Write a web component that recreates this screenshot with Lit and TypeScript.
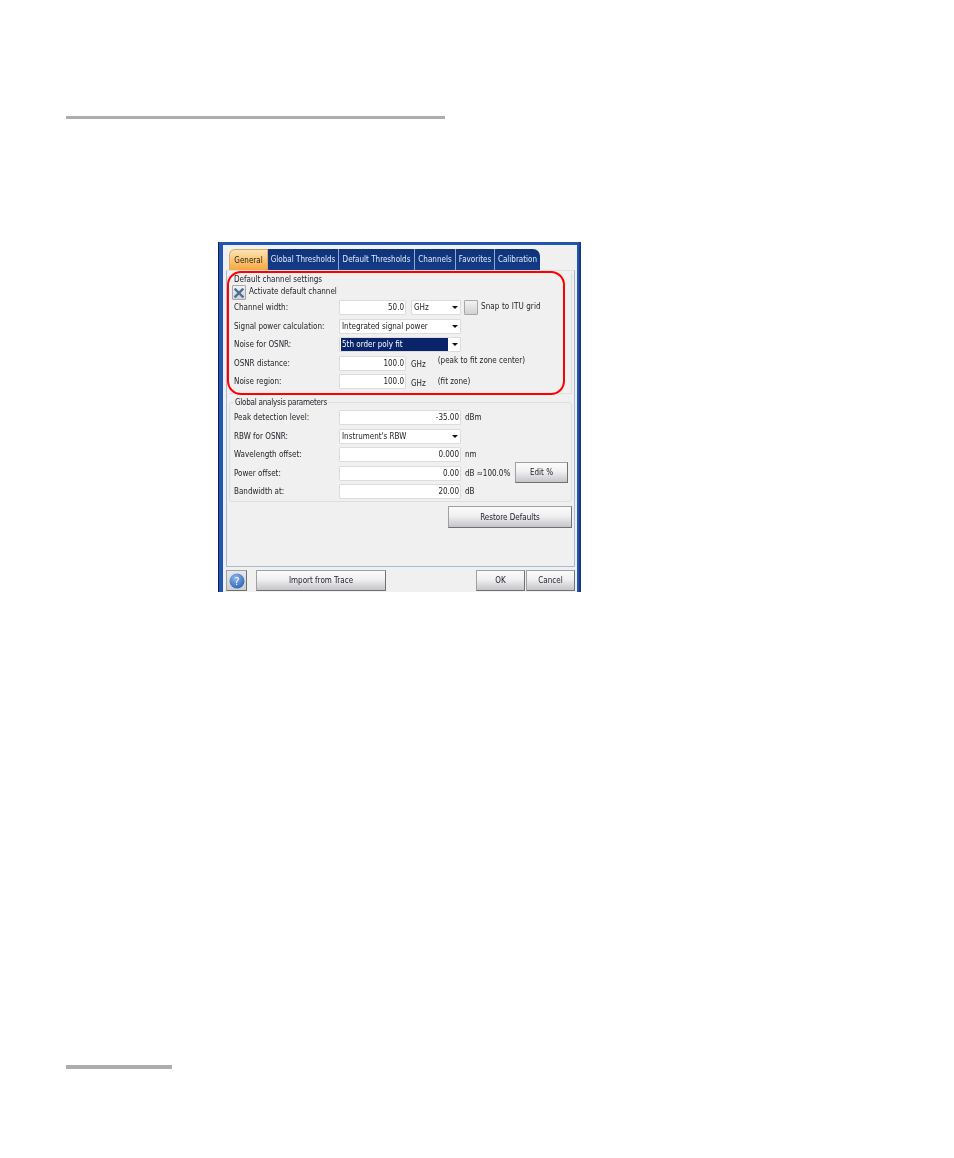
import { LitElement, html, css } from "lit";
import { customElement } from "lit/decorators.js";

const tabs = ["General", "Global Thresholds", "Default Thresholds", "Channels", "Favorites", "Calibration"];

@customElement("app-root")
export class AppRoot extends LitElement {
  static styles = css`
    :host { display: block; height: 1158px; background: #fff; font-family: "DejaVu Sans Condensed", "DejaVu Sans", sans-serif; font-stretch: condensed; }
    .page { padding: 116px 0 0 66px; }
    .rule { background: #adadad; }
    .rule.top { width: 379px; height: 3px; }
    .rule.bottom { width: 106px; height: 4px; margin-top: 473px; }
    .window {
      position: relative; box-sizing: border-box; width: 363px; height: 350px;
      margin: 123px 0 0 152px; padding: 3px 4px 0 5px;
      background: #2055b0; box-shadow: inset 1px 0 #10234f, inset -2px 0 #1a3a80;
      font-size: 8px; color: #22222a; filter: blur(0.25px);
    }
    .inner { height: 347px; background: #f0f0f0; padding: 4px 0 0 3px; box-sizing: border-box; width: 354px; }
    .tabs { display: flex; height: 21px; margin-left: 3px; white-space: nowrap; }
    .tab {
      display: flex; align-items: center; justify-content: center; box-sizing: border-box;
      background: linear-gradient(#0f3378, #133c88); color: #e6ecf8; border-right: 1px solid #8ea6d0;
    }
    .tab:nth-child(1) { width: 39px; background: linear-gradient(#fde3b4, #f7a83e); color: #2a2210; border-radius: 6px 0 0 0; border: 1px solid #d9a866; border-bottom: none; }
    .tab:nth-child(2) { width: 71px; }
    .tab:nth-child(3) { width: 76px; }
    .tab:nth-child(4) { width: 41px; }
    .tab:nth-child(5) { width: 39px; }
    .tab:nth-child(6) { width: 45px; border-right: none; border-radius: 0 7px 0 0; }
    .panel {
      box-sizing: border-box; width: 349px; height: 297px; padding: 2px 2px 0 2px;
      border: 1px solid #a9b8d0; border-top: 1px solid #e0e0e0;
    }
    .group { box-sizing: border-box; width: 343px; padding-left: 4px; border-right: 1px solid #dedede; }
    .group.one { height: 121px; padding-top: 1px; border-bottom: 1px solid #e2e2e2; }
    .group.two { height: 100px; margin-top: 8px; border: 1px solid #dedede; border-radius: 3px; }
    .legend { height: 11px; line-height: 11px; padding-left: 1px; }
    .group.two .legend { height: 8px; line-height: 8px; margin-top: -4px; background: #f0f0f0; display: table; padding: 0 1px; margin-bottom: 3px; letter-spacing: -0.25px; }
    .check-row { display: flex; align-items: center; gap: 3px; height: 15px; margin-left: -1px; }
    .check-row span { margin-top: -3px; }
    .cb {
      box-sizing: border-box; width: 14px; height: 15px; border: 1px solid #a8a8a8; border-radius: 1px;
      background: linear-gradient(#f2f2f2, #d2d2d2); display: flex; align-items: center; justify-content: center; flex: none;
    }
    .rows { display: grid; row-gap: 3.5px; }
    .row { display: flex; align-items: center; height: 15px; white-space: nowrap; }
    .label { width: 106px; flex: none; padding-left: 1px; box-sizing: border-box; }
    .group.two .label { width: 105px; padding-left: 0; }
    .field {
      box-sizing: border-box; height: 15px; line-height: 13px; background: #fff; border: 1px solid #dcdcdc; border-radius: 1px;
      padding: 0 1px 0 2px; flex: none; white-space: nowrap; position: relative; color: #1c1c1c;
    }
    .num { width: 67px; text-align: right; }
    .num.wide { width: 122px; }
    .sel { width: 122px; }
    .sel.small { width: 50px; margin-left: 5px; }
    .sel::after {
      content: ""; position: absolute; right: 2px; top: 5px;
      border: 3px solid transparent; border-top: 3px solid #111; border-bottom: none;
    }
    .hl { display: block; background: #0a246a; color: #fff; width: 106px; margin-left: -1px; padding-left: 1px; height: 13px; }
    .unit { margin-left: 4px; }
    .unit.wide { width: 46px; flex: none; }
    .low { margin-left: 5px; padding-top: 3px; }
    .note { margin-left: 12px; }
    .note.a { margin-top: -5px; }
    .snap { margin-left: 3px; margin-top: -1px; }
    .snap-text { margin-left: 3px; margin-top: -3px; letter-spacing: 0.1px; }
    .btn {
      box-sizing: border-box; display: flex; align-items: center; justify-content: center; flex: none;
      background: linear-gradient(#fbfbfb 0%, #f0f0f2 45%, #c4c4ca 100%);
      border: 1px solid #a0a0a0; border-right-color: #707070; border-bottom-color: #707070; color: #1d1d28;
    }
    .edit { width: 53px; height: 21px; margin-left: 4px; margin-top: -2px; }
    .restore-row { display: flex; justify-content: flex-end; width: 343px; margin-top: 4px; }
    .restore { width: 124px; height: 22px; }
    .footer { display: flex; margin-top: 3px; height: 21px; width: 349px; }
    .help { width: 21px; height: 21px; padding: 0; background: linear-gradient(#e8e8e8, #cfcfcf); }
    .import { width: 130px; margin-left: 9px; }
    .ok { width: 49px; margin-left: 90px; }
    .cancel { width: 49px; margin-left: 1px; }
    .ring {
      position: absolute; left: 9px; top: 29px; width: 338px; height: 124px; box-sizing: border-box;
      border: 2px solid #f00; border-radius: 14px; pointer-events: none;
    }
    .help text { font-family: "DejaVu Sans", sans-serif; font-size: 11px; fill: #fff; }
  `;

  render() {
    return html`
      <div class="page">
        <div class="rule top"></div>
        <div class="window">
          <div class="inner">
            <div class="tabs">${tabs.map((t) => html`<div class="tab">${t}</div>`)}</div>
            <div class="panel">
              <div class="group one">
                <div class="legend">Default channel settings</div>
                <div class="check-row">
                  <div class="cb">
                    <svg width="10" height="10" viewBox="0 0 10 10"><path d="M1.5 1.5L8.5 8.5M8.5 1.5L1.5 8.5" stroke="#4a6f96" stroke-width="2.4" stroke-linecap="square"/></svg>
                  </div>
                  <span>Activate default channel</span>
                </div>
                <div class="rows">
                  <div class="row">
                    <div class="label">Channel width:</div>
                    <div class="field num">50.0</div>
                    <div class="field sel small">GHz</div>
                    <div class="cb snap"></div>
                    <div class="snap-text">Snap to ITU grid</div>
                  </div>
                  <div class="row">
                    <div class="label">Signal power calculation:</div>
                    <div class="field sel">Integrated signal power</div>
                  </div>
                  <div class="row">
                    <div class="label">Noise for OSNR:</div>
                    <div class="field sel"><span class="hl">5th order poly fit</span></div>
                  </div>
                  <div class="row">
                    <div class="label">OSNR distance:</div>
                    <div class="field num">100.0</div>
                    <div class="low">GHz</div>
                    <div class="note a">(peak to fit zone center)</div>
                  </div>
                  <div class="row">
                    <div class="label">Noise region:</div>
                    <div class="field num">100.0</div>
                    <div class="low">GHz</div>
                    <div class="note">(fit zone)</div>
                  </div>
                </div>
              </div>
              <div class="group two">
                <div class="legend">Global analysis parameters</div>
                <div class="rows">
                  <div class="row">
                    <div class="label">Peak detection level:</div>
                    <div class="field num wide">-35.00</div>
                    <div class="unit">dBm</div>
                  </div>
                  <div class="row">
                    <div class="label">RBW for OSNR:</div>
                    <div class="field sel">Instrument's RBW</div>
                  </div>
                  <div class="row">
                    <div class="label">Wavelength offset:</div>
                    <div class="field num wide">0.000</div>
                    <div class="unit">nm</div>
                  </div>
                  <div class="row">
                    <div class="label">Power offset:</div>
                    <div class="field num wide">0.00</div>
                    <div class="unit wide">dB ≈100.0%</div>
                    <div class="btn edit">Edit %</div>
                  </div>
                  <div class="row">
                    <div class="label">Bandwidth at:</div>
                    <div class="field num wide">20.00</div>
                    <div class="unit">dB</div>
                  </div>
                </div>
              </div>
              <div class="restore-row"><div class="btn restore">Restore Defaults</div></div>
            </div>
            <div class="footer">
              <div class="btn help">
                <svg width="16" height="16" viewBox="0 0 16 16">
                  <defs><radialGradient id="h" cx="40%" cy="30%" r="75%"><stop offset="0" stop-color="#8fb6ea"/><stop offset="1" stop-color="#2a64b8"/></radialGradient></defs>
                  <circle cx="8" cy="8" r="7.5" fill="url(#h)"/>
                  <text x="8" y="12" text-anchor="middle">?</text>
                </svg>
              </div>
              <div class="btn import">Import from Trace</div>
              <div class="btn ok">OK</div>
              <div class="btn cancel">Cancel</div>
            </div>
          </div>
          <div class="ring"></div>
        </div>
        <div class="rule bottom"></div>
      </div>
    `;
  }
}
